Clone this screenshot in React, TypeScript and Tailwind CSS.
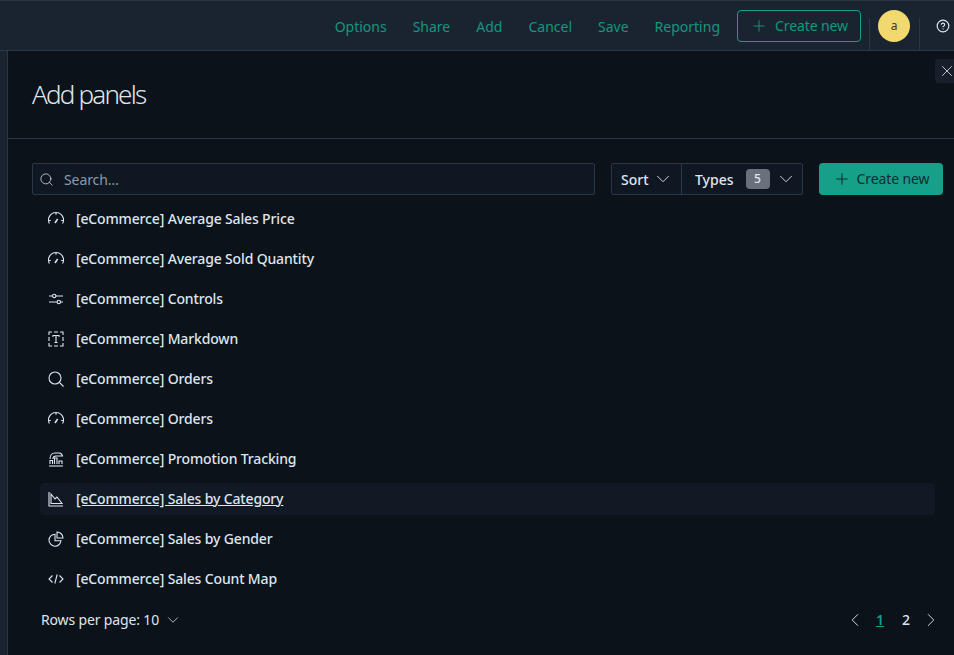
import { ChevronDown, ChevronLeft, ChevronRight, CircleHelp, Plus, Search, X } from 'lucide-react'
import type { ReactNode } from 'react'

const font = "font-['Noto_Sans',sans-serif]"

function IconBase({ children }: { children: ReactNode }) {
    return (
        <svg width="16" height="16" viewBox="0 0 16 16" fill="none" stroke="#dfe5ef" strokeWidth="1.1" className="shrink-0">
            {children}
        </svg>
    )
}

const Gauge = () => (
    <IconBase>
        <path d="M1.4 12.5A7.5 7.5 0 1 1 14.6 12.5" />
        <path d="M7 12L9.6 8" strokeWidth="1.5" />
        <path d="M1 9.5h1.8M13.2 9.5H15M8 2v1.8" />
    </IconBase>
)
const Controls = () => (
    <IconBase>
        <path d="M1 5h3.5M8 5h7M1 11h8M12.5 11H15" />
        <circle cx="6.2" cy="5" r="1.7" />
        <circle cx="10.8" cy="11" r="1.7" />
    </IconBase>
)
const Markdown = () => (
    <IconBase>
        <path d="M1 4V1h3M6 1h4M12 1h3v3M15 6v4M15 12v3h-3M10 15H6M4 15H1v-3M1 10V6" />
        <path d="M5 6V4.5h6V6M8 4.5v7M6.5 11.5h3" />
    </IconBase>
)
const Lens = () => (
    <IconBase>
        <circle cx="7" cy="7" r="6" />
        <path d="M11.4 11.4L15.5 15.5" />
    </IconBase>
)
const Tracking = () => (
    <IconBase>
        <path d="M1 15h14" />
        <path d="M2 13V9.5h2.5V13M6.5 13V7H9v6M11 13v-3h3v3" />
        <path d="M2 8C2 4 4 2 7 2h4c2 0 3 1 3.5 3H8C6 5 5 6 4.8 8" />
    </IconBase>
)
const AreaChart = () => (
    <IconBase>
        <path d="M1 1v14h14" />
        <path d="M3 12.5V3l4 5 2-2 5 6.5z" />
    </IconBase>
)
const Pie = () => (
    <IconBase>
        <path d="M7 3.2a6 6 0 1 0 6 6.6H7z" />
        <path d="M9 1a6 6 0 0 1 6 6H9z" />
    </IconBase>
)
const Code = () => (
    <IconBase>
        <path d="M4.5 4.5L1 8l3.5 3.5M11.5 4.5L15 8l-3.5 3.5M9.2 3.5L6.8 12.5" />
    </IconBase>
)

const rows = [
    { label: '[eCommerce] Average Sales Price', icon: <Gauge /> },
    { label: '[eCommerce] Average Sold Quantity', icon: <Gauge /> },
    { label: '[eCommerce] Controls', icon: <Controls /> },
    { label: '[eCommerce] Markdown', icon: <Markdown /> },
    { label: '[eCommerce] Orders', icon: <Lens /> },
    { label: '[eCommerce] Orders', icon: <Gauge /> },
    { label: '[eCommerce] Promotion Tracking', icon: <Tracking /> },
    { label: '[eCommerce] Sales by Category', icon: <AreaChart />, active: true },
    { label: '[eCommerce] Sales by Gender', icon: <Pie /> },
    { label: '[eCommerce] Sales Count Map', icon: <Code /> },
]

const navLinks = ['Options', 'Share', 'Add', 'Cancel', 'Save', 'Reporting']

export default function App() {
    return (
        <div className={`${font} w-[954px] h-[655px] overflow-hidden flex flex-col bg-[#0b1219] text-[#dfe5ef]`}>
            <header className="h-[51px] shrink-0 flex items-center justify-end bg-[#1a2430] border-t border-t-[#2b3647] border-b border-b-[#2b3647]">
                <nav className="flex items-center gap-[26px] pt-[2px] text-sm text-[#16967f] mr-[17px]">
                    {navLinks.map((link) => (
                        <span key={link}>{link}</span>
                    ))}
                </nav>
                <button className="w-[124px] h-8 flex items-center justify-center gap-[7px] rounded border border-[#16a08a] text-sm tracking-[-0.1px] text-[#16967f]">
                    <Plus size={18} strokeWidth={1.2} />
                    Create new
                </button>
                <div className="ml-2 w-[51px] self-stretch flex justify-center">
                    <div className="w-full h-full relative">
                        <div className="absolute left-0 right-0 bottom-0 h-8 border-l border-r border-[#2b3647]" />
                        <div className="absolute left-[9px] top-[9px] w-8 h-8 rounded-full bg-[#f1d86f] flex items-center justify-center text-xs text-[#3a3a2a]">a</div>
                    </div>
                </div>
                <div className="w-[34px] pl-4">
                    <CircleHelp size={14} className="text-[#dfe5ef]" />
                </div>
            </header>

            <div className="flex-1 flex min-h-0">
                <div className="w-[7px] shrink-0 bg-[#1a2430]" />
                <section className="flex-1 relative border-l border-[#2b3647]">
                    <button className="absolute top-[8px] left-[927px] w-6 h-6 rounded flex items-center justify-center bg-[#171f2a]">
                        <X size={18} strokeWidth={1.1} />
                    </button>

                    <div className="h-[88px] flex items-center px-6 border-b border-[#2b3647]">
                        <h1 className="text-[26px] font-light tracking-[-1.8px]">Add panels</h1>
                    </div>

                    <div className="pt-6 pl-6 pr-[11px]">
                        <div className="flex items-center h-8">
                            <label className="w-[563px] h-8 flex items-center gap-2 pl-[6px] rounded-[2px] border border-[#2b3647] bg-[#0f1722] text-sm text-[#8e98a8]">
                                <Search size={15} strokeWidth={1.2} className="text-[#dfe5ef]" />
                                <span className="ml-[2px] pt-[2px] tracking-[-0.1px]">Search…</span>
                            </label>
                            <div className="ml-4 w-[192px] h-8 flex items-center rounded-[2px] border border-[#2b3647] bg-[#0f1722] text-sm font-medium">
                                <div className="w-[70px] h-full flex items-center gap-[3px] pl-[9px] border-r border-[#2b3647]">
                                    <span className="pt-[2px]">Sort</span>
                                    <ChevronDown size={22} strokeWidth={1} />
                                </div>
                                <div className="flex-1 flex items-center pl-[13px]">
                                    <span className="pt-[2px]">Types</span>
                                    <span className="ml-3 w-6 h-5 rounded flex items-center justify-center bg-[#6a717d] text-xs font-medium">5</span>
                                    <ChevronDown size={22} strokeWidth={1} className="ml-[5px]" />
                                </div>
                            </div>
                            <button className="ml-4 w-[124px] h-8 flex items-center justify-center gap-[6px] rounded bg-[#16a08a] text-sm tracking-[-0.1px] text-[#0e2c30]">
                                <Plus size={18} strokeWidth={1.4} />
                                Create new
                            </button>
                        </div>

                        <ul className="mt-2 ml-2 w-[895px] flex flex-col gap-2">
                            {rows.map((row, i) => (
                                <li
                                    key={i}
                                    className={`h-8 flex items-center gap-3 px-2 rounded text-sm font-medium tracking-[-0.15px] ${row.active ? 'bg-[#111a24]' : ''}`}
                                >
                                    {row.icon}
                                    <span className={row.active ? 'underline' : ''}>{row.label}</span>
                                </li>
                            ))}
                        </ul>

                        <div className="mt-[13px] ml-[9px] flex items-center justify-between h-6 text-sm">
                            <div className="flex items-center gap-[5px] tracking-[-0.15px]">
                                Rows per page: 10
                                <ChevronDown size={18} strokeWidth={1} />
                            </div>
                            <div className="flex items-center mr-[1px] text-sm font-medium">
                                <ChevronLeft size={22} strokeWidth={1} />
                                <span className="ml-[8px] w-3 text-center font-semibold text-[#16a08a] underline">1</span>
                                <span className="ml-[14px] w-3 text-center">2</span>
                                <ChevronRight size={22} strokeWidth={1} className="ml-[8px]" />
                            </div>
                        </div>
                    </div>
                </section>
            </div>
        </div>
    )
}
